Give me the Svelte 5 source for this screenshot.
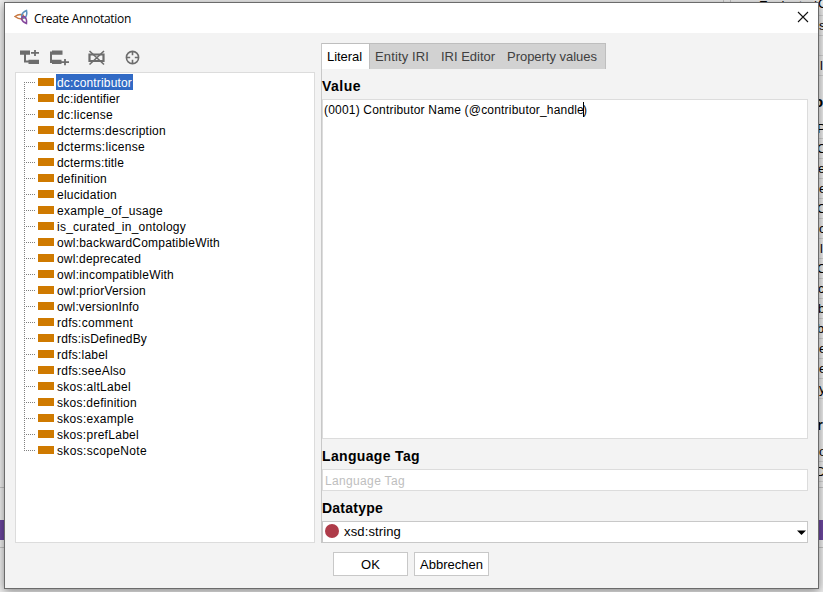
<script>
  const items = [
    ['dc:contributor', 75], ['dc:identifier', 63], ['dc:license', 56],
    ['dcterms:description', 109], ['dcterms:license', 88], ['dcterms:title', 67],
    ['definition', 50], ['elucidation', 60], ['example_of_usage', 106],
    ['is_curated_in_ontology', 129], ['owl:backwardCompatibleWith', 163],
    ['owl:deprecated', 84], ['owl:incompatibleWith', 117], ['owl:priorVersion', 89],
    ['owl:versionInfo', 82], ['rdfs:comment', 76], ['rdfs:isDefinedBy', 90],
    ['rdfs:label', 51], ['rdfs:seeAlso', 69], ['skos:altLabel', 74],
    ['skos:definition', 80], ['skos:example', 77], ['skos:prefLabel', 82],
    ['skos:scopeNote', 90]
  ];
  const tabs = [['Literal', 35], ['Entity IRI', 54], ['IRI Editor', 54], ['Property values', 90]];

  const behind = [
    ['s', 819, 30], ['l', 820, 70], ['P', 817, 133], ['C', 817, 153],
    ['e', 818, 173], ['e', 819, 193], ['C', 817, 213], ['c', 819, 233],
    ['l', 820, 253], ['C', 817, 273], ['c', 818, 293], ['b', 818, 313],
    ['b', 817, 333], ['e', 819, 353], ['e', 819, 373], ['y', 819, 393],
    ['o', 819, 456], ['D', 816, 476]
  ];
  const rules = [15, 35, 55, 75, 138, 158, 178, 198, 218, 238, 258, 278, 298, 318, 338, 358, 378, 398, 461, 481];

  // Spread the glyphs of a label over the given advance width.
  function fit(node, width) {
    const natural = node.getBoundingClientRect().width;
    node.style.letterSpacing = (width - natural) / node.textContent.length + 'px';
  }
</script>

<div class="screen">
  <svg class="backdrop" width="823" height="592">
    <rect width="823" height="592" fill="#eeeeee" />
    <path d="M723.5 0V3M730.5 0V3M0 487.5H823M0 547.5H823" stroke="#c4c4c4" />
    {#each rules as y}
      <path d="M818 {y + 0.5}H823" stroke="#d2d2d2" />
    {/each}
    <path d="M0 520H823V540H0Z" fill="#6c479f" />
    <text x="759" y="10" textLength="58">Evaluated</text>
    <text x="818" y="8">C</text>
    {#each behind as [t, x, y]}
      <text {x} {y}>{t}</text>
    {/each}
    <text x="814" y="107" class="strong">o</text>
    <text x="817" y="430" class="strong">r</text>
  </svg>

  <div class="dialog">
    <header>
      <svg class="logo" width="16" height="16" viewBox="0 0 16 16" fill="none" stroke-width="1.5">
        <path d="M1 7.500Q5 4.500 9 6Q11 8.500 8 10Q4 10 1 7.500Z" stroke="#c87840" />
        <path d="M12.500 1.500Q8.500 3 7.500 6.500Q8 9.500 11 9Q13.500 6 12.500 1.500Z" stroke="#5b91bd" />
        <path d="M12.500 14.500Q8.500 13 7.500 10Q8 6.500 11 8Q13 10 12.500 14.500Z" stroke="#84479c" />
      </svg>
      <span class="title" use:fit={97}>Create Annotation</span>
      <svg class="close" width="12" height="12" viewBox="0 0 12 12"><path d="M1 1L11 11M11 1L1 11" stroke="#111" stroke-width="1.1" /></svg>
    </header>

    <main>
      <section class="left">
        <div class="toolbar">
          <svg width="20" height="16" viewBox="0 0 20 16" fill="#6d6d6d">
            <path d="M0 .500h10v4.300H0zM8.500 9.700h10.500v4.300H8.500zM4 4h2v6.500h3v2H4zM11 2h8v1.800h-8zM14.100 0h1.800v6h-1.800z" />
          </svg>
          <svg width="20" height="16" viewBox="0 0 20 16" fill="#6d6d6d">
            <path d="M2 .500h10.500v4.300H2zM2 9.700h9.500v4.300H2zM0 1.500h3v2H2v7.500h1v2H0zM11 11.200h8v1.800h-8zM14.100 9h1.800v6.200h-1.800z" />
          </svg>
          <svg class="del" width="18" height="16" viewBox="0 0 18 16" fill="none" stroke="#6d6d6d">
            <path d="M1.500 4.500h14v6.500h-14z" stroke-width="2.200" /><path d="M1.500 1L16 14.500M16 1L1.500 14.500" stroke-width="1.600" />
          </svg>
          <svg class="target" width="16" height="16" viewBox="0 0 16 16" fill="none" stroke="#6d6d6d">
            <circle cx="7.500" cy="7.500" r="6.100" stroke-width="1.600" /><path d="M7.500 1.500v3.700M7.500 9.800v3.700M1.500 7.500h3.700M9.800 7.500h3.700" stroke-width="1.600" />
          </svg>
        </div>
        <ul>
          {#each items as [name, w], i}
            <li>
              <svg width="38" height="16" class="branch">
                <path d={i === 0 ? 'M8.5 8V16' : i === items.length - 1 ? 'M8.5 0V9' : 'M8.5 0V16'} stroke="#808080" stroke-dasharray="1 1" />
                <path d="M8 8.500H20" stroke="#808080" stroke-dasharray="1 1" />
                <rect x="22" y="4" width="16" height="8" fill="#cf7a00" />
              </svg>
              <span class="node" class:selected={i === 0}><span use:fit={w}>{name}</span></span>
            </li>
          {/each}
        </ul>
      </section>

      <section class="right">
        <nav>
          {#each tabs as [name, w], i}
            <div class="tab" class:active={i === 0}><span use:fit={w}>{name}</span></div>
          {/each}
        </nav>
        <h2><span use:fit={39}>Value</span></h2>
        <div class="area"><span use:fit={260}>(0001) Contributor Name (@contributor_handle</span><i></i><span>)</span></div>
        <h2><span use:fit={98}>Language Tag</span></h2>
        <div class="field"><span use:fit={80}>Language Tag</span></div>
        <h2><span use:fit={61}>Datatype</span></h2>
        <div class="combo">
          <b></b><span use:fit={57}>xsd:string</span>
          <svg width="9" height="5" viewBox="0 0 9 5"><path d="M0 0.500H9L4.500 5Z" /></svg>
        </div>
      </section>
    </main>

    <footer>
      <div class="button"><span use:fit={19}>OK</span></div>
      <div class="button"><span use:fit={63}>Abbrechen</span></div>
    </footer>
  </div>
</div>

<style>
  .screen {
    position: relative;
    box-sizing: border-box;
    width: 823px;
    height: 592px;
    padding: 2px 4px;
    overflow: hidden;
    font: 12px "Liberation Sans", Arial, sans-serif;
    color: #000;
  }
  .screen span { white-space: pre; }
  .backdrop { position: absolute; left: 0; top: 0; }
  .backdrop text { font-size: 13px; fill: #000; }
  .backdrop .strong { font-size: 15px; font-weight: bold; }
  .dialog {
    position: relative;
    box-sizing: border-box;
    width: 815px;
    height: 587px;
    border: 1px solid #6b6b6b;
    background: #f3f3f3;
    box-shadow: 0 2px 9px rgba(0, 0, 0, .45);
    display: flex;
    flex-direction: column;
  }
  header {
    height: 30px;
    box-sizing: border-box;
    background: #fff;
    display: flex;
    align-items: center;
    padding: 0 9px 0 9px;
  }
  .logo { margin-top: -2px; }
  .title { font: 12px "Open Sans", "Noto Sans", sans-serif; margin: 0 0 0 4px; }
  .close { margin-left: auto; margin-top: -2px; }
  main { display: flex; height: 510px; padding: 10px 0 0 10px; box-sizing: border-box; }
  .left { width: 300px; }
  .toolbar { height: 29px; display: flex; align-items: center; padding-left: 5px; box-sizing: border-box; }
  .toolbar svg + svg { margin-left: 10px; }
  .toolbar svg.del { margin-left: 18px; }
  .toolbar svg.target { margin-left: 19px; }
  ul {
    box-sizing: border-box;
    height: 471px;
    margin: 0;
    padding: 1px 0 0;
    list-style: none;
    background: #fff;
    border: 1px solid #dcdcdc;
  }
  li { height: 16px; display: flex; }
  .branch { flex: none; }
  .node { height: 16px; line-height: 18px; margin-left: 2px; padding: 0 1px; }
  .selected { background: #316ac5; color: #fff; }
  .right { width: 487px; margin-left: 6px; box-sizing: border-box; border-left: 1px solid #c8c8c8; }
  nav { display: flex; width: max-content; box-sizing: border-box; height: 26px; border: 1px solid #bebebe; border-left: 0; border-bottom: 0; background: #d2d2d2; color: #404040; font-size: 13px; }
  .tab { line-height: 26px; padding: 0 6px; }
  .tab:last-child { padding-right: 8px; }
  .tab.active { background: #fff; color: #000; padding: 0 7px 0 5px; border-right: 1px solid #bebebe; margin-right: -1px; }
  h2 { margin: 0; padding: 9px 0 5px; font-size: 14px; line-height: 16px; font-weight: bold; }
  .area {
    box-sizing: border-box; height: 340px; border: 1px solid #dcdcdc; background: #fff;
    padding: 3px 1px; display: flex; align-items: flex-start; line-height: 15px;
  }
  .area i { width: 1px; height: 15px; background: #000; margin: -1px -1px 0 -1px; }
  .field { box-sizing: border-box; height: 22px; border: 1px solid #dcdcdc; background: #fff; color: #bebebe; line-height: 22px; padding-left: 2px; }
  .combo { box-sizing: border-box; height: 22px; border: 1px solid #c8c8c8; background: #fff; display: flex; align-items: center; padding: 0 1px 0 2px; font-size: 13px; }
  .combo span { margin-top: -2px; }
  .combo b { width: 14px; height: 14px; border-radius: 50%; background: #ae3b49; margin: -2px 5px 0 0; }
  .combo svg { margin-left: auto; }
  footer { display: flex; gap: 6px; padding: 9px 0 0 328px; }
  .button { box-sizing: border-box; width: 75px; height: 24px; border: 1px solid #c8c8c8; background: #fff; text-align: center; line-height: 24px; font-size: 13px; }
</style>
